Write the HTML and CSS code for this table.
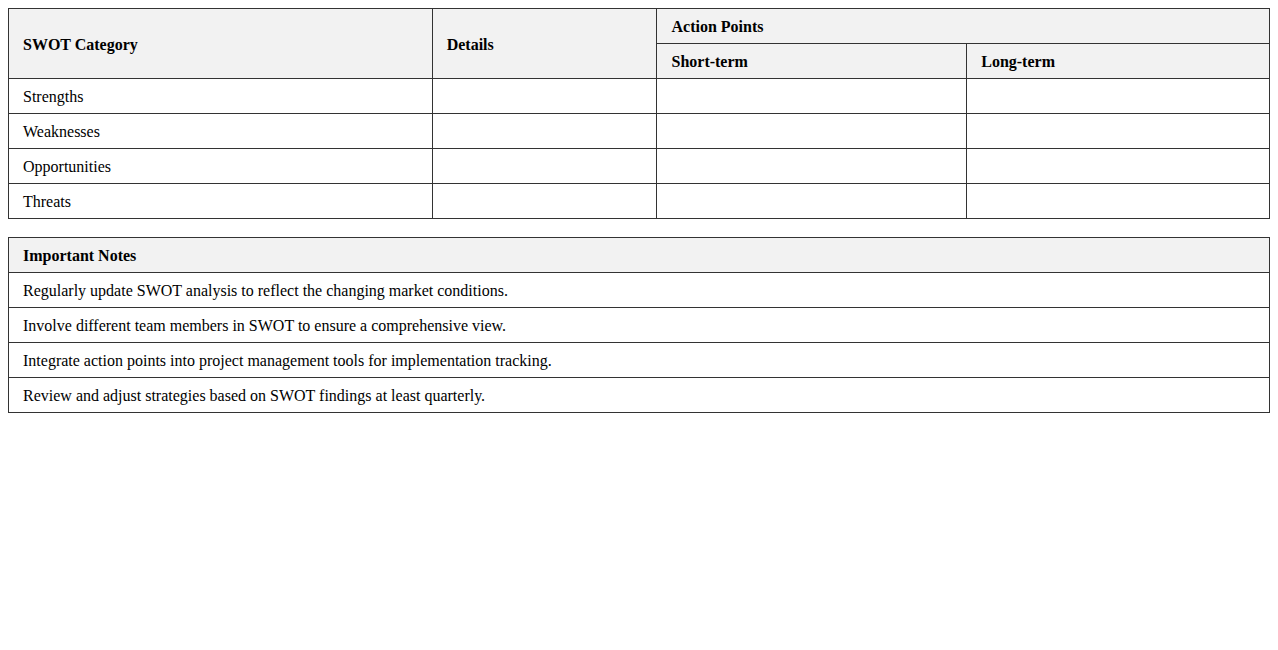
FILE: index.html
```html
<!DOCTYPE html>
<html>
<head>
<meta charset="utf-8">
<link rel="stylesheet" href="styles.css">
</head>
<body>
<table class="grid">
  <thead>
    <tr>
      <th class="c1" rowspan="2">SWOT Category</th>
      <th class="c2" rowspan="2">Details</th>
      <th colspan="2">Action Points</th>
    </tr>
    <tr>
      <th class="c3">Short-term</th>
      <th class="c4">Long-term</th>
    </tr>
  </thead>
  <tbody>
    <tr><td>Strengths</td><td></td><td></td><td></td></tr>
    <tr><td>Weaknesses</td><td></td><td></td><td></td></tr>
    <tr><td>Opportunities</td><td></td><td></td><td></td></tr>
    <tr><td>Threats</td><td></td><td></td><td></td></tr>
  </tbody>
</table>
<table class="grid notes">
  <thead>
    <tr><th>Important Notes</th></tr>
  </thead>
  <tbody>
    <tr><td>Regularly update SWOT analysis to reflect the changing market conditions.</td></tr>
    <tr><td>Involve different team members in SWOT to ensure a comprehensive view.</td></tr>
    <tr><td>Integrate action points into project management tools for implementation tracking.</td></tr>
    <tr><td>Review and adjust strategies based on SWOT findings at least quarterly.</td></tr>
  </tbody>
</table>
</body>
</html>
```

FILE: styles.css
```css
body {
  margin: 8px;
  font-family: "Liberation Serif", "Times New Roman", serif;
  font-size: 16px;
  color: #000;
  background: #fff;
}
.grid {
  width: 100%;
  border-collapse: collapse;
  margin-bottom: 18px;
}
.grid th,
.grid td {
  border: 1px solid #333;
  padding: 9px 14px 7px;
  text-align: left;
  height: 18px;
  line-height: 18px;
}
.grid th {
  background: #f2f2f2;
  font-weight: bold;
}
.c1 { width: 395px; }
.c2 { width: 196px; }
.c3 { width: 281px; }
.c4 { width: 274px; }
```
